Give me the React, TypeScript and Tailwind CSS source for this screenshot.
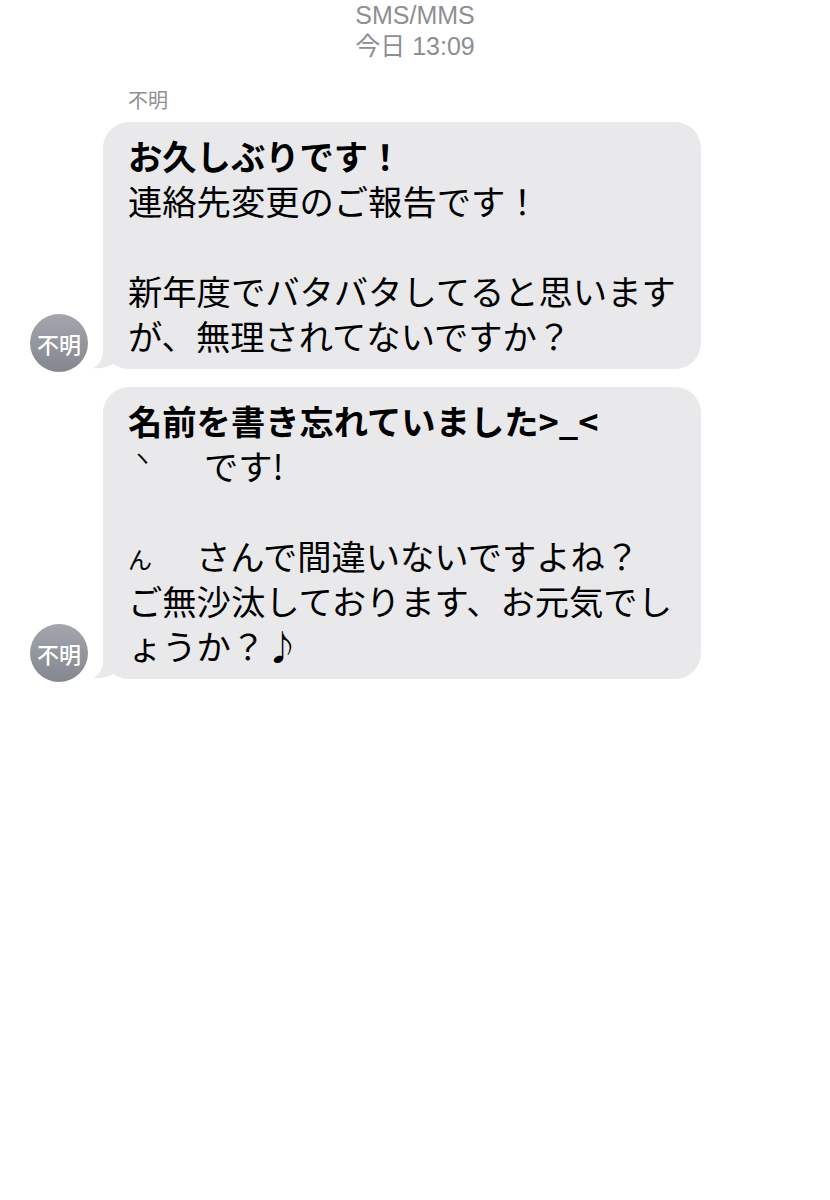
import React from "react";

const font = {
  fontFamily: '"Noto Sans CJK JP", "Liberation Sans", sans-serif',
};

const headFont = {
  fontFamily: '"Liberation Sans", "Noto Sans CJK JP", sans-serif',
};

function Avatar() {
  return (
    <div className="w-[58px] h-[58px] shrink-0 rounded-full bg-gradient-to-b from-[#a3a6ad] to-[#84878f] flex items-center justify-center text-white text-[22px] font-medium mb-[-3px]">
      不明
    </div>
  );
}

function Tail() {
  return (
    <svg
      className="absolute left-[-12px] bottom-0"
      width="34"
      height="32"
      viewBox="0 0 34 32"
    >
      <path
        d="M12 0 L12 14 C12 22 8 28 2 31 C10 32 18 30 24 26 C27 29 31 31 34 32 L34 0 Z"
        fill="#e9e9eb"
      />
    </svg>
  );
}

function Bubble({ children }: { children: React.ReactNode }) {
  return (
    <div className="flex items-end gap-[15px]">
      <Avatar />
      <div className="relative w-[598px] rounded-[26px] bg-[#e9e9eb] pl-[25px] pr-[16px] py-[11px] text-[34.3px] leading-[45px] text-black whitespace-nowrap">
        <Tail />
        <div className="relative">{children}</div>
      </div>
    </div>
  );
}

export default function App() {
  return (
    <div className="w-[830px] h-[1200px] bg-white" style={font}>
      <div className="flex flex-col items-center text-[#8e8e93] text-[25px]" style={headFont}>
        <div className="h-[31px] leading-[31px]">SMS/MMS</div>
        <div className="h-[31px] leading-[31px]">今日 13:09</div>
      </div>
      <div className="pl-[30px] pt-[26px]">
        <div className="pl-[98px] text-[20px] leading-[24px] text-[#8e8e93]">不明</div>
        <div className="mt-[10px] flex flex-col gap-[18px]">
          <Bubble>
            <div className="font-bold">お久しぶりです！</div>
            <div>連絡先変更のご報告です！</div>
            <div className="h-[45px]" />
            <div>新年度でバタバタしてると思います</div>
            <div>が、無理されてないですか？</div>
          </Bubble>
          <Bubble>
            <div className="font-bold">名前を書き忘れていました&gt;_&lt;</div>
            <div className="flex h-[45px]">
              <span className="w-[76px] text-[22px] leading-[22px] pl-[3px] pt-[2px]">ヽ</span>
              <span>です!</span>
            </div>
            <div className="h-[45px]" />
            <div className="flex h-[45px]">
              <span className="w-[68px] text-[24px] leading-[24px] pt-[14px]">ん</span>
              <span>さんで間違いないですよね？</span>
            </div>
            <div>ご無沙汰しております、お元気でし</div>
            <div>ょうか？♪</div>
          </Bubble>
        </div>
      </div>
    </div>
  );
}
